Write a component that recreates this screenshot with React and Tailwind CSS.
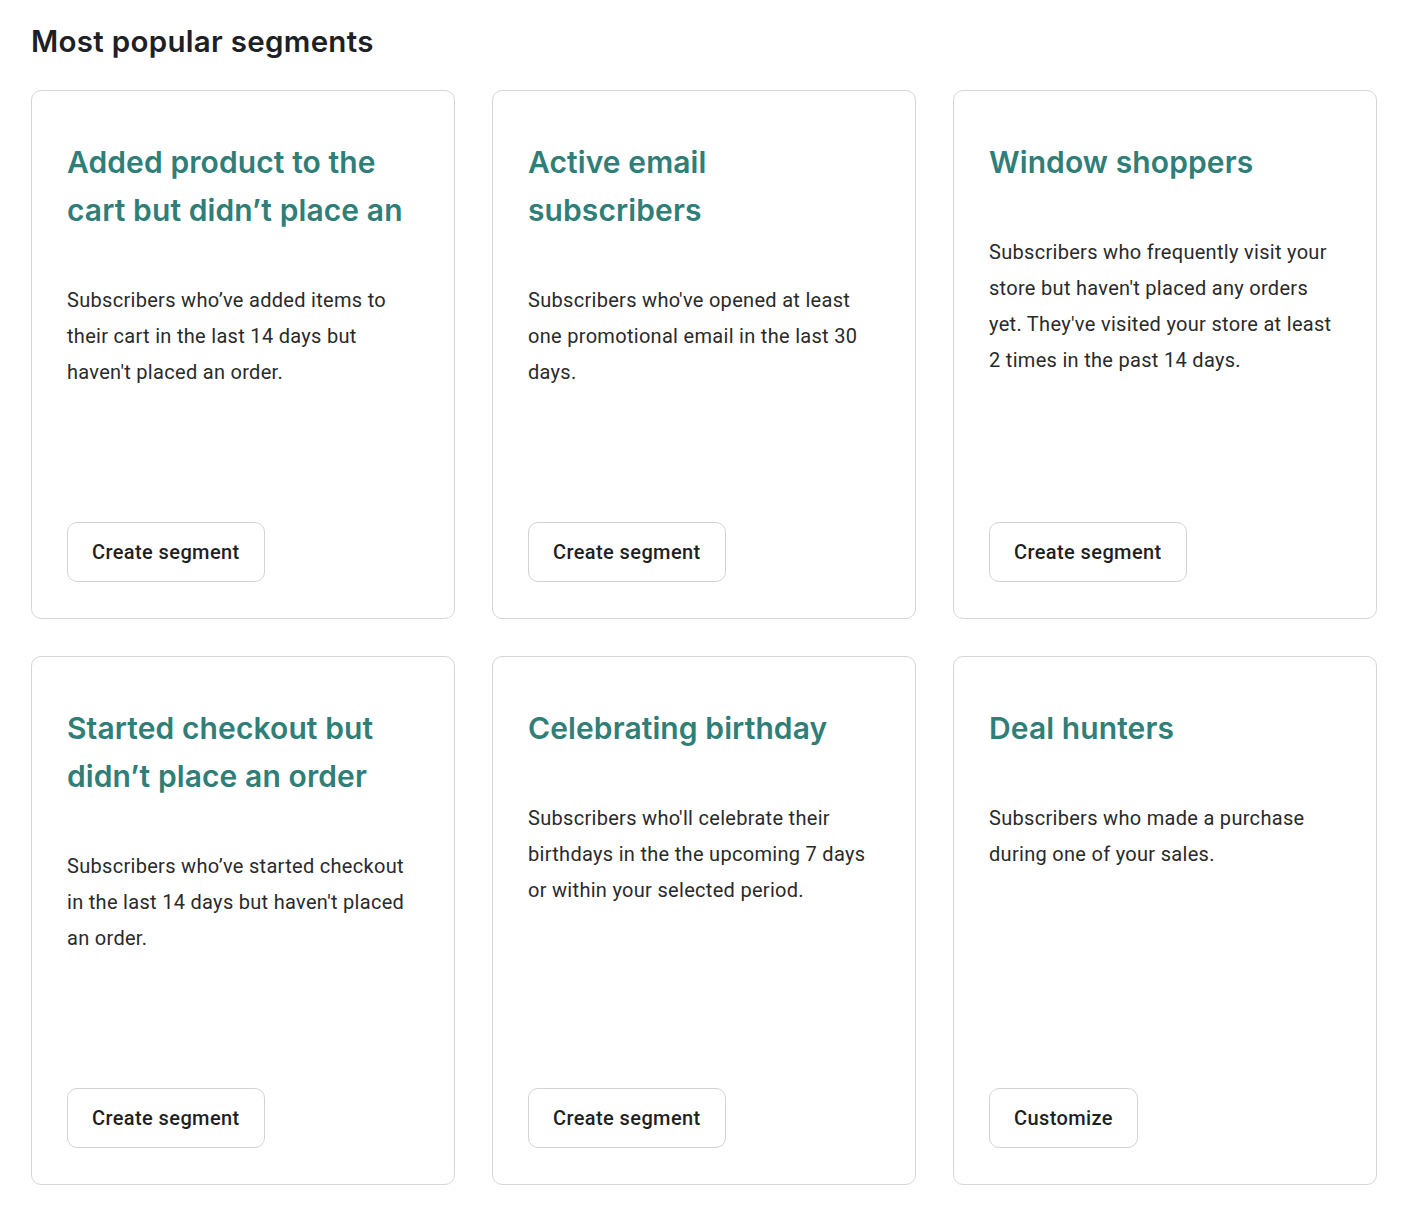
import React from 'react';

const segments = [
  {
    title: 'Added product to the cart but didn’t place an order',
    desc: "Subscribers who’ve added items to their cart in the last 14 days but haven't placed an order.",
    action: 'Create segment',
  },
  {
    title: 'Active email subscribers',
    desc: "Subscribers who've opened at least one promotional email in the last 30 days.",
    action: 'Create segment',
  },
  {
    title: 'Window shoppers',
    desc: "Subscribers who frequently visit your store but haven't placed any orders yet. They've visited your store at least 2 times in the past 14 days.",
    action: 'Create segment',
  },
  {
    title: 'Started checkout but didn’t place an order',
    desc: "Subscribers who’ve started checkout in the last 14 days but haven't placed an order.",
    action: 'Create segment',
  },
  {
    title: 'Celebrating birthday',
    desc: "Subscribers who'll celebrate their birthdays in the the upcoming 7 days or within your selected period.",
    action: 'Create segment',
  },
  {
    title: 'Deal hunters',
    desc: 'Subscribers who made a purchase during one of your sales.',
    action: 'Customize',
  },
];

const SegmentCard = ({ title, desc, action }) => (
  <div className="flex h-[529px] flex-col rounded-[10px] border border-[#d6d6d6] bg-white px-[35px] pt-[47px] pb-[36px]">
    <h3 className="max-h-[96px] overflow-hidden font-['Inter',sans-serif] text-[30px] font-semibold leading-[48px] tracking-[0.1px] text-[#2f7e77]">
      {title}
    </h3>
    <p className="mt-[48px] font-['Roboto',sans-serif] text-[20px] leading-[36px] tracking-[0.3px] text-[#2a2a2a]">
      {desc}
    </p>
    <div className="mt-auto">
      <button className="h-[60px] rounded-[10px] border border-[#d3d3d3] bg-white px-[24px] font-['Roboto',sans-serif] text-[20px] font-medium tracking-[0.4px] text-[#1f1f1f]">
        {action}
      </button>
    </div>
  </div>
);

const App = () => {
  return (
    <div className="min-h-[1213px] bg-white pt-[21px] pl-[31px]">
      <h2 className="mb-[29px] font-['Inter',sans-serif] text-[29.5px] font-semibold leading-[40px] tracking-[0.3px] text-[#1d2125]">
        Most popular segments
      </h2>
      <div className="grid w-[1346px] grid-cols-3 gap-[37px]">
        {segments.map((s) => (
          <SegmentCard key={s.title} {...s} />
        ))}
      </div>
    </div>
  );
};

export default App;
